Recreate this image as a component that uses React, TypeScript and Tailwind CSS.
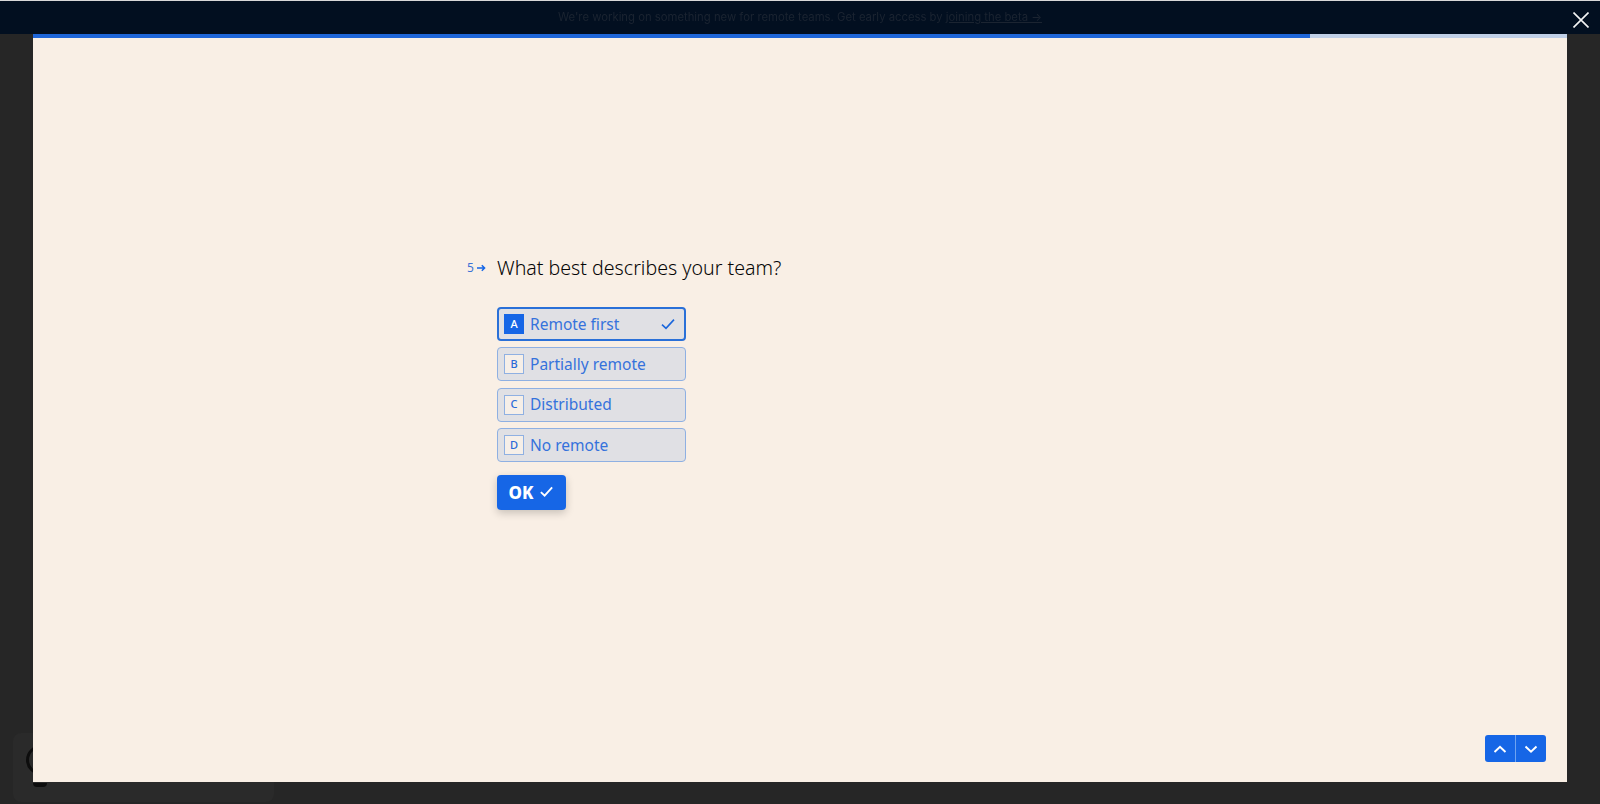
import React from 'react'

const options = [
  { key: 'A', label: 'Remote first', selected: true },
  { key: 'B', label: 'Partially remote', selected: false },
  { key: 'C', label: 'Distributed', selected: false },
  { key: 'D', label: 'No remote', selected: false },
]

function Check({ className }: { className: string }) {
  return (
    <svg viewBox="0 0 16 16" fill="none" stroke="currentColor" className={className}>
      <path d="M2 8.6 L6 12.4 L14 3.6" />
    </svg>
  )
}

function Option({ optionKey, label, selected }: { optionKey: string; label: string; selected: boolean }) {
  return (
    <div
      className={`flex h-[34px] w-[189px] items-center rounded-[4px] bg-[#e0e0e4] pr-[8px] ${
        selected ? 'border-2 border-[#2a70d8] pl-[5px]' : 'border border-[#8fb0e2] pl-[6px]'
      }`}
    >
      <span
        className={`flex h-5 w-5 shrink-0 items-center justify-center border text-[11px] font-medium ${
          selected
            ? 'border-[#1666e6] bg-[#1666e6] text-white'
            : 'border-[#8fb0e2] bg-[#f6efe8] text-[#2a6ad8]'
        }`}
      >
        {optionKey}
      </span>
      <span className="ml-[6px] flex-1 pt-[1px] text-[15.5px] leading-none text-[#3572dc]">{label}</span>
      {selected && <Check className="h-4 w-4 stroke-[1.6] text-[#1a66dc]" />}
    </div>
  )
}

export default function App() {
  return (
    <div className="relative flex h-screen flex-col overflow-hidden bg-[#262626] font-['Noto_Sans',sans-serif]">
      <div className="absolute bottom-[2px] left-[13px] h-[69px] w-[261px] rounded-lg bg-[#2a2a2a]">
        <div className="absolute left-[13px] top-[12px] h-[30px] w-[30px] rounded-full border-[3px] border-[#0d0d0d]" />
        <div className="absolute left-[20px] top-[50px] h-[4px] w-[14px] rounded-b bg-[#0d0d0d]" />
      </div>

      <div className="relative flex h-[34px] shrink-0 items-center justify-center border-t border-[#d8d8d8] bg-[#020f20]">
        <p className="font-['Inter',sans-serif] text-[11.3px] text-[#1b2431] blur-[0.5px]">
          We're working on something new for remote teams. Get early access by{' '}
          <span className="underline">joining the beta →</span>
        </p>
        <svg viewBox="0 0 16 16" stroke="currentColor" className="absolute right-[11px] top-[11px] h-4 w-4 stroke-[1.6] text-[#f4f4f4]">
          <path d="M0.5 0.5 L15.5 15.5 M15.5 0.5 L0.5 15.5" />
        </svg>
      </div>

      <div className="relative flex min-h-0 flex-1 flex-col pb-[22px] pl-[33px] pr-[33px]">
        <div className="relative flex flex-1 flex-col bg-[#f9efe5]">
          <div className="h-1 shrink-0 bg-[#c0cfe6]">
            <div className="h-full w-[1277px] bg-[#1f66d8]" />
          </div>

          <div className="pl-[434px] pt-[216px]">
            <div className="flex items-center">
              <span className="flex w-[30px] items-center text-[12px] leading-none text-[#3d72d6]">
                5
                <svg viewBox="0 0 10 10" fill="none" stroke="currentColor" className="ml-[2px] h-[10px] w-[10px] stroke-[1.5] text-[#1666e6]">
                  <path d="M1 5 H8.5 M5.8 2.2 L8.6 5 L5.8 7.8" />
                </svg>
              </span>
              <h1 className="text-[19.6px] leading-[28px] font-light text-[#050505]">What best describes your team?</h1>
            </div>

            <div className="ml-[30px] mt-[25px] flex flex-col gap-[6.3px]">
              {options.map((o) => (
                <Option key={o.key} optionKey={o.key} label={o.label} selected={o.selected} />
              ))}
            </div>

            <button className="ml-[30px] mt-[13px] flex h-[35px] w-[69px] items-center justify-center gap-[6px] rounded-[4px] bg-[#1666e6] text-[17px] font-extrabold text-white shadow-[0_3px_8px_rgba(0,0,0,0.2)]">
              <span className="pt-[1px]">OK</span>
              <Check className="-mt-[2px] h-[15px] w-[15px] stroke-2" />
            </button>
          </div>

          <div className="absolute bottom-[20px] right-[21px] flex h-[27px] w-[61px] overflow-hidden rounded-[3px] bg-[#1666e6] text-white">
            <div className="flex flex-1 items-center justify-center border-r border-[#6fa3f0]">
              <svg viewBox="0 0 14 14" fill="none" stroke="currentColor" className="h-[14px] w-[14px] stroke-2">
                <path d="M1.5 10 L7 4.8 L12.5 10" />
              </svg>
            </div>
            <div className="flex flex-1 items-center justify-center">
              <svg viewBox="0 0 14 14" fill="none" stroke="currentColor" className="h-[14px] w-[14px] stroke-2">
                <path d="M1.5 4.5 L7 9.7 L12.5 4.5" />
              </svg>
            </div>
          </div>
        </div>
      </div>
    </div>
  )
}
